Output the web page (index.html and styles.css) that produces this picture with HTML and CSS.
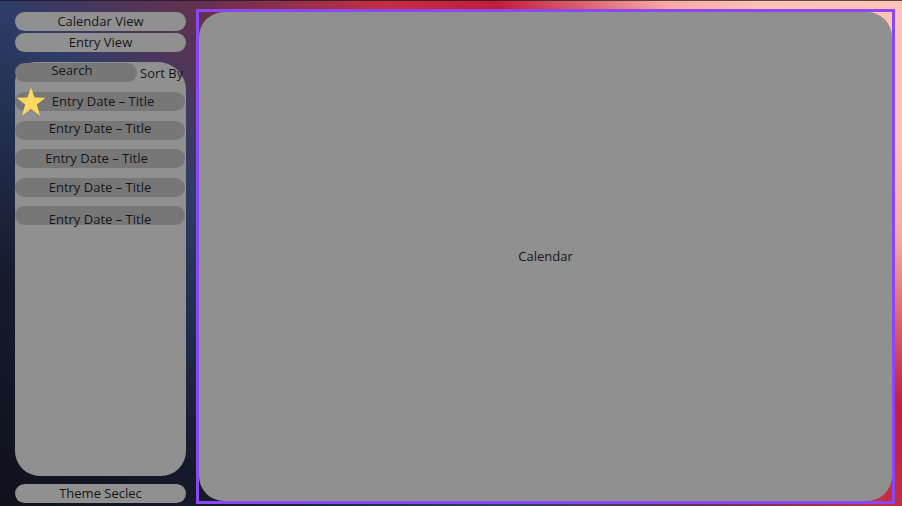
FILE: index.html
```html
<!DOCTYPE html>
<html lang="en">
<head>
<meta charset="utf-8">
<title>Journal</title>
<link rel="stylesheet" href="styles.css">
</head>
<body>
<div class="app">
  <aside class="sidebar">
    <div class="pill">Calendar View</div>
    <div class="pill">Entry View</div>
    <div class="panel">
      <div class="toolbar">
        <div class="search">Search</div>
        <span class="sort">Sort By</span>
      </div>
      <div class="entries">
        <div class="entry entry-fav">
          <svg class="star" viewBox="0 0 30 30" width="30" height="30" aria-hidden="true"><polygon points="15,0.5 18.6,10.6 29.5,10.8 20.8,17.5 24,28.5 15,22 6,28.5 9.2,17.5 0.5,10.8 11.4,10.6" fill="#ffd95e"/></svg>
          <span class="entry-text shift-right">Entry Date – Title</span>
        </div>
        <div class="entry entry-high"><span class="entry-text">Entry Date – Title</span></div>
        <div class="entry"><span class="entry-text shift-left">Entry Date – Title</span></div>
        <div class="entry"><span class="entry-text">Entry Date – Title</span></div>
        <div class="entry entry-low"><span class="entry-text">Entry Date – Title</span></div>
      </div>
    </div>
    <div class="pill">Theme Seclec</div>
  </aside>
  <main class="main">
    <div class="calendar">Calendar</div>
  </main>
</div>
</body>
</html>
```

FILE: styles.css
```css
* { box-sizing: border-box; }

html, body {
  margin: 0;
  padding: 0;
}

body {
  font-family: "Open Sans", "Noto Sans", sans-serif;
  font-size: 13px;
  color: #161616;
}

.app {
  display: flex;
  width: 902px;
  height: 506px;
  overflow: hidden;
  background: linear-gradient(45deg,
    #0f111c 0%,
    #151a2b 16%,
    #2e3d69 36%,
    #67304f 50%,
    #c42f41 63%,
    #c21d3a 71%,
    #f9a9a2 83%,
    #ffc2b3 90%,
    #ffc4b4 100%);
  box-shadow: inset 0 1px 0 rgba(20, 20, 30, 0.7);
}

.sidebar {
  width: 171px;
  margin: 12px 0 3px 15px;
  display: flex;
  flex-direction: column;
}

.pill {
  height: 19px;
  border-radius: 10px;
  background: #909090;
  display: flex;
  align-items: center;
  justify-content: center;
  line-height: 1;
}

.pill + .pill {
  margin-top: 2px;
}

.panel {
  flex: 1;
  margin: 10px 0 8px;
  background: #909090;
  border-radius: 20px 28px 25px 25px;
  display: flex;
  flex-direction: column;
}

.toolbar {
  display: flex;
  align-items: center;
  margin-top: 1px;
  gap: 3px;
}

.search {
  width: 122px;
  height: 19px;
  border-radius: 10px;
  background: #777777;
  display: flex;
  align-items: center;
  justify-content: center;
  padding: 0 8px 4px 0;
  line-height: 1;
}

.sort {
  line-height: 1;
  padding-top: 1px;
  white-space: nowrap;
}

.entries {
  display: flex;
  flex-direction: column;
  gap: 10px;
  margin-top: 10px;
}

.entry {
  position: relative;
  width: 170px;
  height: 19px;
  border-radius: 10px;
  background: #777777;
  display: flex;
  align-items: center;
  justify-content: center;
  line-height: 1;
}

.entry + .entry {
  margin-top: -0.5px;
}

.entry-high { padding-bottom: 3px; }
.entry-low { padding-top: 7px; }

.entry-text {
  white-space: nowrap;
}

.shift-right { padding-left: 6px; }
.shift-left { padding-right: 7px; }

.star {
  position: absolute;
  left: 1px;
  top: -5px;
}

.main {
  flex: 1;
  margin: 9px 7px 2px 10px;
  border: 3px solid #8b46f6;
  display: flex;
}

.calendar {
  flex: 1;
  background: #909090;
  border-radius: 25px;
  display: flex;
  align-items: center;
  justify-content: center;
  line-height: 1;
}
```
